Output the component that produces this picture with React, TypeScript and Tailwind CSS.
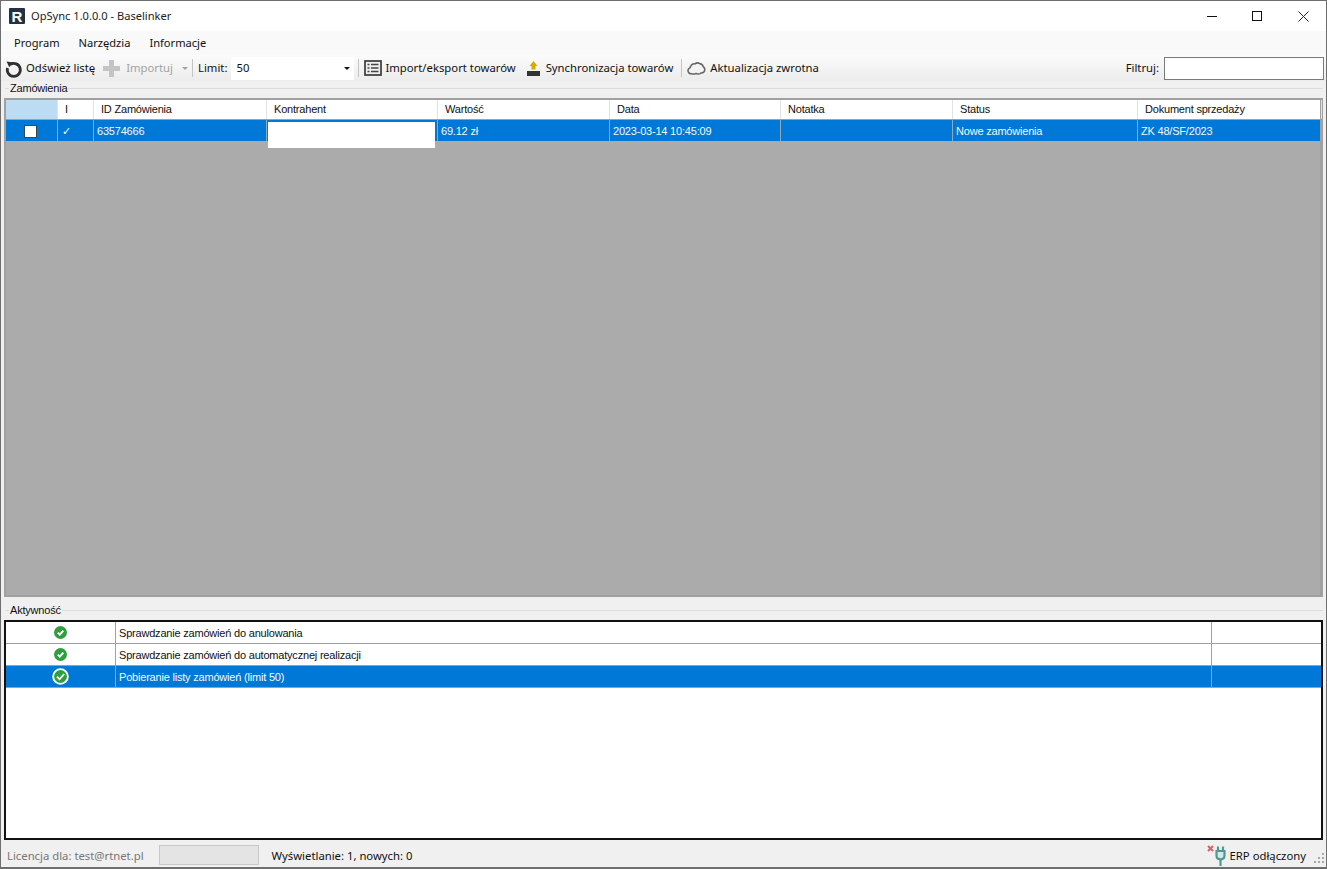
const uiFont = "font-['Noto_Sans',sans-serif] text-[11.3px] leading-none text-[#111]";
const gridFont = "font-['Liberation_Sans',sans-serif] text-[11px] tracking-[-0.2px] leading-none";

const columns = [
  { title: "", width: "w-[52px]" },
  { title: "I", width: "w-[36px]" },
  { title: "ID Zamówienia", width: "w-[173px]" },
  { title: "Kontrahent", width: "w-[171px]" },
  { title: "Wartość", width: "w-[172px]" },
  { title: "Data", width: "w-[171px]" },
  { title: "Notatka", width: "w-[172px]" },
  { title: "Status", width: "w-[185px]" },
  { title: "Dokument sprzedaży", width: "w-[184px]" },
];

const orderRow = ["", "✓", "63574666", "", "69.12 zł", "2023-03-14 10:45:09", "", "Nowe zamówienia", "ZK 48/SF/2023"];

const activity = [
  { text: "Sprawdzanie zamówień do anulowania", selected: false },
  { text: "Sprawdzanie zamówień do automatycznej realizacji", selected: false },
  { text: "Pobieranie listy zamówień (limit 50)", selected: true },
];

const Separator = () => <div className="mx-[4px] h-[18px] w-px bg-[#c4c4c4]" />;

const RefreshIcon = () => (
  <svg width="18" height="19" viewBox="0 0 18 19" fill="none">
    <path d="M5.400 5.400a6.500 6.500 0 1 1-2.800 3.600" stroke="#2f2f2f" strokeWidth="2.800" />
    <path d="M1.600 2.400l6.600 1-4 4.800z" fill="#2f2f2f" />
  </svg>
);

const PlusIcon = () => (
  <svg width="19" height="19" viewBox="0 0 19 19">
    <path d="M7 1h5v6h6v5h-6v6H7v-6H1V7h6z" fill="#c4c4c4" />
  </svg>
);

const ListIcon = () => (
  <svg width="18" height="16" viewBox="0 0 18 16" fill="none">
    <rect x="1" y="1" width="16" height="14" stroke="#444" strokeWidth="1.800" fill="#eee" />
    <path d="M3.500 4.500h2M3.500 8h2M3.500 11.500h2M7 4.500h7.500M7 8h7.500M7 11.500h7.500" stroke="#444" strokeWidth="1.500" />
  </svg>
);

const UploadIcon = () => (
  <svg width="15" height="17" viewBox="0 0 15 17">
    <path d="M7.500 1l4 5H9.500v3.500h-4V6h-2z" fill="#d2ad00" />
    <rect x="1" y="11" width="13" height="5" fill="#333" />
  </svg>
);

const CloudIcon = () => (
  <svg width="19" height="15" viewBox="0 0 19 15" fill="#f4f4f4">
    <path
      d="M4.500 12.800C2.200 12.800 1 11.300 1 9.600c0-1.500 1-2.500 2-2.900C4 4 5.800 2.600 8 2.800c1-.8 3.200-1.200 4.800-.2 1.500.2 3 1.300 3.400 3 1 .8 1.800 1.800 1.600 3.200-.2 2.200-2 3.200-3.800 3.200-1 1-3.600 1.200-5 .4-1.400.6-3.300.8-4.500.4z"
      stroke="#666"
      strokeWidth="1.600"
    />
  </svg>
);

const CheckCircle = ({ ring }: { ring?: boolean }) => (
  <svg width={ring ? 17 : 13} height={ring ? 17 : 13} viewBox="0 0 17 17">
    <circle cx="8.500" cy="8.500" r={ring ? 8.300 : 8.500} fill={ring ? "#fff" : "#2f9e3f"} />
    {ring && <circle cx="8.500" cy="8.500" r="6.400" fill="#2f9e3f" />}
    <path d="M5 8.700l2.600 2.600L12.200 6" fill="none" stroke="#fff" strokeWidth={ring ? 1.800 : 2.600} />
  </svg>
);

const PlugIcon = () => (
  <svg width="22" height="22" viewBox="0 0 22 22" fill="none">
    <path d="M1 2l5 5M6 2L1 7" stroke="#d9606a" strokeWidth="2" />
    <path d="M9.500 7v4.500c0 2.500 1.600 3.800 4 3.800s4-1.300 4-3.800V7z" stroke="#4f9a90" strokeWidth="2.200" fill="#d5e8e5" />
    <path d="M11 7V2.500M16 7V2.500M13.500 15v7" stroke="#4f9a90" strokeWidth="2.200" />
  </svg>
);

const Grip = () => (
  <div className="grid grid-cols-3 gap-[2px]">
    {[0, 1, 2, 3, 4, 5, 6, 7, 8].map((i) => (
      <span key={i} className={i === 0 || i === 1 || i === 3 ? "size-[2px]" : "size-[2px] bg-[#a8a8a8]"} />
    ))}
  </div>
);

const GroupTitle = ({ title }: { title: string }) => (
  <div className="flex h-[13px] items-center pl-[1px]">
    <div className="h-px w-[4px] bg-[#dcdcdc]" />
    <span className={`px-px text-[#111] ${gridFont}`}>{title}</span>
    <div className="h-px flex-1 bg-[#dcdcdc]" />
  </div>
);

const App = () => {
  return (
    <div className={`flex h-[869px] w-[1327px] flex-col overflow-hidden border border-b-2 border-[#6e6e6e] bg-[#f0f0f0] ${uiFont}`}>
      {/* title bar */}
      <div className="flex h-[30px] shrink-0 items-center bg-white pl-[8px]">
        <div className="flex size-[16px] items-center justify-center rounded-[1px] bg-[#24323f] font-['Liberation_Sans',sans-serif] text-[15px] font-bold text-white">
          R
        </div>
        <span className="ml-[6px] text-[11.100px] text-[#222]">OpSync 1.0.0.0 - Baselinker</span>
        <div className="ml-auto flex items-center">
          <div className="flex w-[45px] justify-center pr-px">
            <div className="h-px w-[10px] bg-[#111]" />
          </div>
          <div className="flex w-[45px] justify-center pr-[2px]">
            <div className="size-[10px] border border-[#111]" />
          </div>
          <div className="flex w-[46px] justify-center pl-px">
            <svg width="11" height="11" viewBox="0 0 11 11" stroke="#222">
              <path d="M.5.500l10 10M10.500.500l-10 10" />
            </svg>
          </div>
        </div>
      </div>

      {/* menu */}
      <div className="flex h-[24px] shrink-0 items-center gap-[19px] bg-[#f9f9f9] pl-[13px] text-[11.100px]">
        <span>Program</span>
        <span>Narzędzia</span>
        <span>Informacje</span>
      </div>

      {/* toolbar */}
      <div className="flex h-[26px] shrink-0 items-center bg-gradient-to-b from-[#fbfbfb] to-[#ececec] pl-[4px] pr-[2px]">
        <RefreshIcon />
        <span className="ml-[3px]">Odśwież listę</span>
        <div className="ml-[7px]">
          <PlusIcon />
        </div>
        <span className="ml-[5px] text-[#a3a3a3]">Importuj</span>
        <span className="ml-[9px] h-0 w-0 border-x-[3px] border-t-[3px] border-x-transparent border-t-[#a3a3a3]" />
        <Separator />
        <span className="ml-[1px]">Limit:</span>
        <div className="ml-[4px] flex h-[23px] w-[123px] items-center justify-between bg-white pl-[5px] pr-[3px]">
          <span>50</span>
          <span className="mr-px h-0 w-0 border-x-[3px] border-t-[3px] border-x-transparent border-t-[#111]" />
        </div>
        <Separator />
        <div className="ml-[1px]">
          <ListIcon />
        </div>
        <span className="ml-[3px]">Import/eksport towarów</span>
        <div className="ml-[10px]">
          <UploadIcon />
        </div>
        <span className="ml-[5px]">Synchronizacja towarów</span>
        <div className="ml-[4px]">
          <Separator />
        </div>
        <div className="ml-px">
          <CloudIcon />
        </div>
        <span className="ml-[4px]">Aktualizacja zwrotna</span>
        <span className="ml-auto">Filtruj:</span>
        <div className="ml-[5px] h-[23px] w-[160px] border border-[#7a7a7a] bg-white" />
      </div>

      {/* orders */}
      <div className="flex h-[516px] shrink-0 flex-col px-[3px] pt-[1px]">
        <GroupTitle title="Zamówienia" />
        <div className="mt-[3px] flex flex-1 flex-col border-[2px] border-r-[3px] border-[#a0a0a0] bg-[#ababab]">
          <div className={`flex h-[20px] shrink-0 border-b border-[#a0a0a0] bg-white text-[#111] ${gridFont}`}>
            {columns.map((col, i) => (
              <div
                key={i}
                className={`flex shrink-0 items-center border-r border-[#e2e2e2] pl-[7px] ${col.width} ${i === 0 ? "bg-[#bcdcf4]" : ""}`}
              >
                {col.title}
              </div>
            ))}
          </div>
          <div className={`relative flex h-[21px] shrink-0 bg-[#0078d7] text-[#f4f8fc] ${gridFont}`}>
            {columns.map((col, i) => (
              <div
                key={i}
                className={`flex shrink-0 items-center border-r border-[#8fa9bd] pt-px ${col.width} ${i === 0 ? "justify-center pr-[2px]" : i === 1 ? "pl-[4px]" : "pl-[3px]"}`}
              >
                {i === 0 ? <div className="size-[13px] border border-[#444] bg-white" /> : orderRow[i]}
              </div>
            ))}
            {/* blanked-out customer name */}
            <div className="absolute left-[262px] top-[2px] h-[26px] w-[167px] bg-white" />
          </div>
        </div>
      </div>

      {/* activity */}
      <div className="mt-[7px] flex min-h-0 flex-1 flex-col px-[3px]">
        <GroupTitle title="Aktywność" />
        <div className={`mt-[3px] flex flex-1 flex-col border-[2px] border-[#111] bg-white text-[#111] ${gridFont}`}>
          {activity.map((row) => (
            <div
              key={row.text}
              className={`flex h-[22px] shrink-0 border-b border-[#a0a0a0] ${row.selected ? "bg-[#0078d7] text-[#f4f8fc]" : ""}`}
            >
              <div className="flex w-[110px] shrink-0 items-center justify-center border-r border-[#a0a0a0]">
                <CheckCircle ring={row.selected} />
              </div>
              <div className="flex w-[1096px] shrink-0 items-center border-r border-[#a0a0a0] pl-[3px] pt-px">{row.text}</div>
            </div>
          ))}
        </div>
      </div>

      {/* status bar */}
      <div className="flex h-[27px] shrink-0 items-center pl-[6px] pr-[2px] pt-[2px]">
        <span className="pt-[2px] text-[#777]">Licencja dla: test@rtnet.pl</span>
        <div className="ml-[15px] h-[20px] w-[100px] border border-[#c8c8c8] bg-[#e4e4e4]" />
        <span className="ml-[13px] pt-[2px]">Wyświetlanie: 1, nowych: 0</span>
        <div className="ml-auto">
          <PlugIcon />
        </div>
        <span className="ml-[1px] pt-[2px]">ERP odłączony</span>
        <div className="ml-[8px] mt-[6px]">
          <Grip />
        </div>
      </div>
    </div>
  );
};

export default App;
